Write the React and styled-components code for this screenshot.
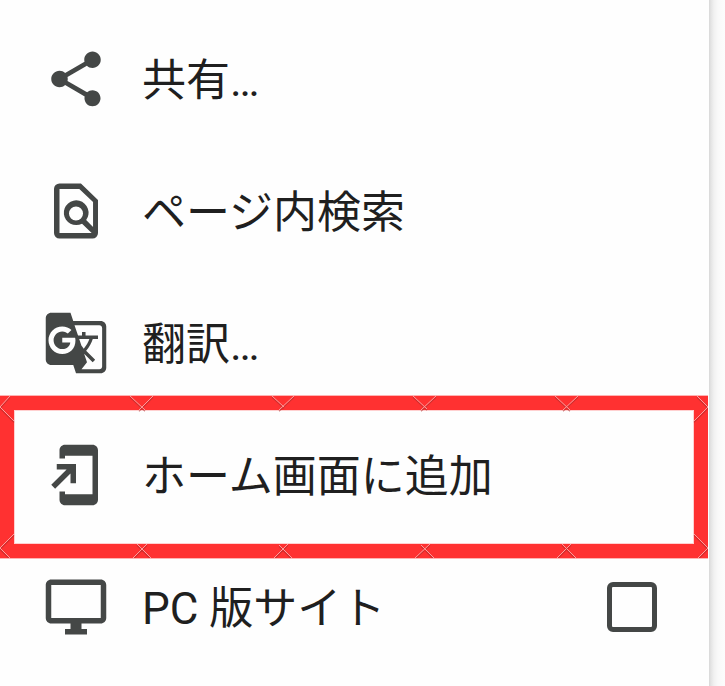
import React from 'react';
import styled, { createGlobalStyle } from 'styled-components';

const GlobalStyle = createGlobalStyle`
  * { box-sizing: border-box; }
  body { margin: 0; background: #fefefe; overflow: hidden; }
`;

const Screen = styled.main`
  display: grid;
  grid-template-columns: 709px 16px;
  width: 725px;
  height: 686px;
  font-family: Roboto, "Noto Sans CJK JP", sans-serif;
  color: #1f1f1f;
`;

const Menu = styled.ul`
  list-style: none;
  margin: 0;
  padding: 13px 0 0;
  height: 686px;
  background: #fefefe;
`;

const EdgeShadow = styled.div`
  background: linear-gradient(90deg, #d8d8d8 0, #e4e4e4 2px, #f1f1f1 5px, #f9f9f9 9px, #fcfcfc 16px);
`;

const MenuItem = styled.li`
  position: relative;
  display: flex;
  align-items: center;
  height: 132px;
  padding: 0 52px 0 43px;
`;

const Icon = styled.svg`
  flex: none;
  width: 66px;
  height: 66px;
  fill: #444746;
`;

const Label = styled.span`
  flex: 1;
  margin-left: 33px;
  padding-top: 4px;
  font-size: 44px;
  line-height: 64px;
  white-space: nowrap;
`;

const Checkbox = styled.span`
  width: 50px;
  height: 50px;
  border: 5.5px solid #444746;
  border-radius: 6px;
`;

const Highlight = styled.div`
  position: absolute;
  top: -14px;
  left: 0;
  width: 708px;
  height: 164px;
  border: 15px solid #ff3131;
  border-width: 15px 14px;
  box-shadow: inset 0 0 0 1px #ffd0d0;

  &::before {
    content: "";
    position: absolute;
    inset: -15px -14px;
    border: solid #ffb3b3;
    border-width: 1px 0;
  }
`;

const Seams = styled.svg`
  position: absolute;
  top: -14px;
  left: -14px;
  width: 708px;
  height: 162px;
  fill: none;
`;

const seamPath = [
  'M10 0L0 11L14 25',
  'M697 0L708 11L694 25',
  'M14 138L0 152L10 162',
  'M694 138L708 152L698 162',
  'M130 0L145 14M153 0L139 14',
  'M272 0L284 11M294 0L279 14',
  'M413 0L427 13M436 0L421 14',
  'M555 0L570 14M578 0L563 14',
  'M133 162L147 148M151 162L137 148',
  'M274 162L288 148M292 162L279 149',
  'M415 162L430 148M434 162L421 149',
  'M557 162L571 148M576 162L562 148',
].join('');

const paths = {
  share: 'M18 16.08c-.76 0-1.44.3-1.96.77L8.91 12.7c.05-.23.09-.46.09-.7s-.04-.47-.09-.7l7.05-4.11c.54.5 1.25.81 2.04.81 1.66 0 3-1.34 3-3s-1.34-3-3-3-3 1.34-3 3c0 .24.04.47.09.7L8.04 9.81C7.5 9.31 6.79 9 6 9c-1.66 0-3 1.34-3 3s1.34 3 3 3c.79 0 1.5-.31 2.04-.81l7.12 4.16c-.05.21-.08.43-.08.65 0 1.61 1.31 2.92 2.92 2.92s2.92-1.31 2.92-2.92-1.31-2.92-2.92-2.92z',
  find: 'M6 2h7.8L20 8v12a2 2 0 0 1-2 2H6a2 2 0 0 1-2-2V4a2 2 0 0 1 2-2zM6 4v16h11.7l-3.5-3.4A4.5 4.5 0 1 1 15.7 15.3l2.5 2.5V8.7L13.2 4zM12 10.35a2.55 2.55 0 1 0 0 5.1a2.55 2.55 0 1 0 0-5.1z',
  translate: 'M21 4H11l-1-3H3c-1.1 0-2 .9-2 2v15c0 1.1.9 2 2 2h8l1 3h9c1.1 0 2-.9 2-2V6c0-1.1-.9-2-2-2zM7 16c-2.76 0-5-2.24-5-5s2.24-5 5-5c1.35 0 2.48.5 3.35 1.3L9.03 8.57c-.38-.36-1.04-.78-2.03-.78-1.74 0-3.15 1.44-3.15 3.21S5.26 14.21 7 14.21c2.01 0 2.84-1.44 2.92-2.41H7v-1.71h4.68c.07.31.12.61.12 1.02C11.8 13.97 9.89 16 7 16zm6.17-5.42h3.7c-.43 1.25-1.11 2.43-2.05 3.47-.31-.35-.6-.72-.86-1.1l-.79-2.37zm8.33 9.92c0 .55-.45 1-1 1H14l2-2.5-1.04-3.1 3.1 3.1.92-.92-3.3-3.25.02-.02c1.13-1.25 1.93-2.69 2.4-4.22H20v-1.3h-4.53V8h-1.29v1.29h-1.44L11.46 5.5h9.04c.55 0 1 .45 1 1v14z',
  home: 'M18 1H8c-1.1 0-2 .9-2 2v3h2V5h10v14H8v-1H6v3c0 1.1.9 2 2 2h10c1.1 0 2-.9 2-2V3c0-1.1-.9-2-2-2zM10 15h2V8H5v2h3.59L3 15.59 4.41 17 10 11.41V15z',
  desktop: 'M21 2H3c-1.1 0-2 .9-2 2v12c0 1.1.9 2 2 2h7v2H8v2h8v-2h-2v-2h7c1.1 0 2-.9 2-2V4c0-1.1-.9-2-2-2zm0 14H3V4h18v12z',
};

const items = [
  { icon: 'share', label: '共有…' },
  { icon: 'find', label: 'ページ内検索' },
  { icon: 'translate', label: '翻訳…' },
  { icon: 'home', label: 'ホーム画面に追加', highlighted: true },
  { icon: 'desktop', label: 'PC 版サイト', checkbox: true },
];

export default function App() {
  return (
    <>
      <GlobalStyle />
      <Screen lang="ja">
        <Menu>
          {items.map(({ icon, label, highlighted, checkbox }) => (
            <MenuItem key={icon}>
              <Icon viewBox="0 0 24 24" aria-hidden="true">
                <path fillRule="evenodd" d={paths[icon]} />
              </Icon>
              <Label>{label}</Label>
              {checkbox && <Checkbox role="checkbox" aria-checked="false" aria-label={label} />}
              {highlighted && (
                <Highlight>
                  <Seams viewBox="0 0 708 162" aria-hidden="true">
                    <path d={seamPath} stroke="#a92c2c" strokeOpacity=".55" strokeWidth="1.2" transform="translate(0 1.3)" />
                    <path d={seamPath} stroke="#ff9c9c" strokeWidth="1" />
                  </Seams>
                </Highlight>
              )}
            </MenuItem>
          ))}
        </Menu>
        <EdgeShadow />
      </Screen>
    </>
  );
}
